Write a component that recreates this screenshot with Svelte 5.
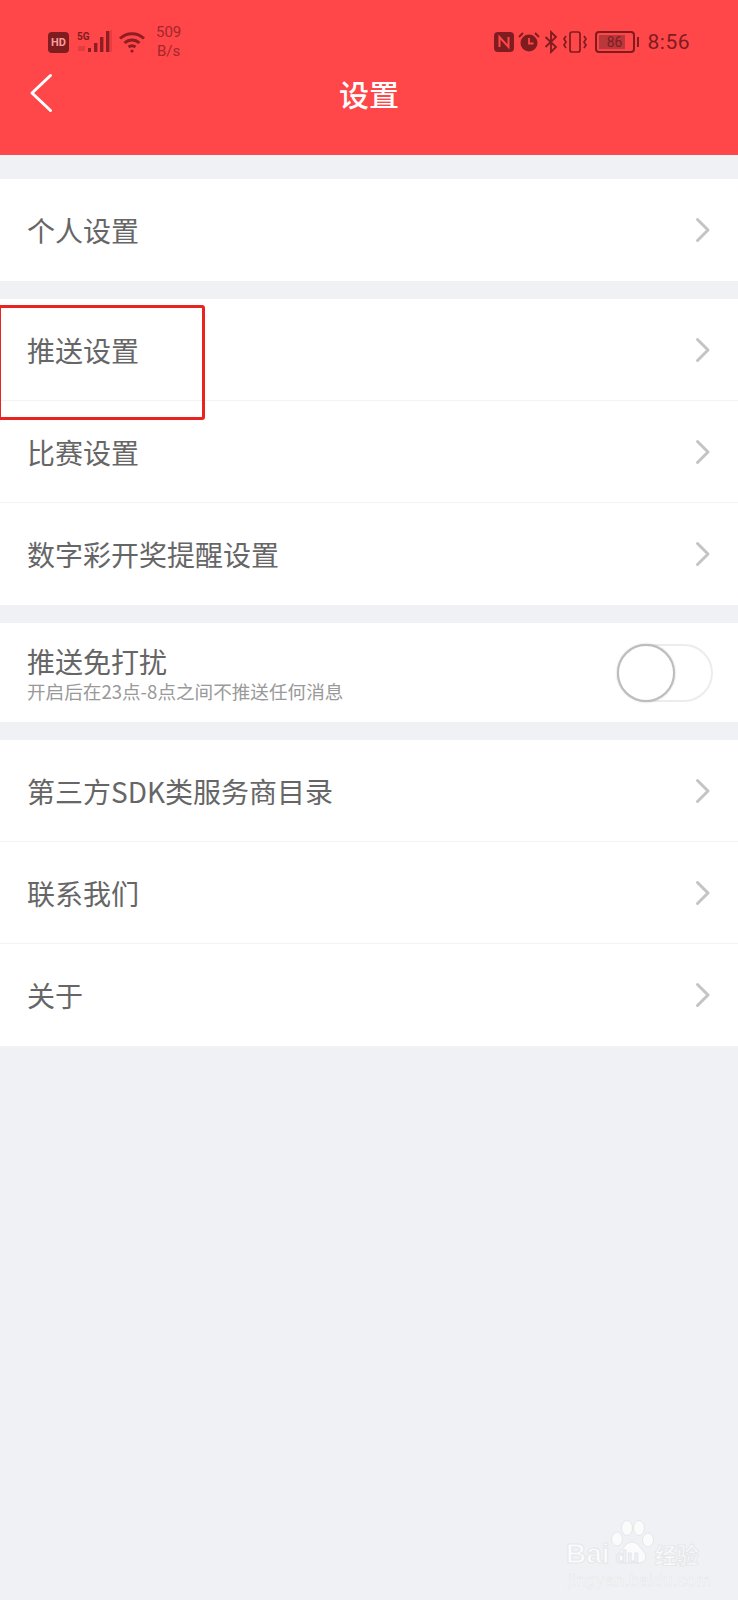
<script>
	const groups = [
		[{ label: '个人设置' }],
		[{ label: '推送设置' }, { label: '比赛设置' }, { label: '数字彩开奖提醒设置' }]
	];
	const lastGroup = [{ label: '第三方SDK类服务商目录' }, { label: '联系我们' }, { label: '关于' }];
</script>

{#snippet row(item)}
	<div class="row">
		<span class="label">{item.label}</span>
		<svg class="chev" width="16" height="26" viewBox="0 0 16 26" fill="none" stroke="#c4c4c4" stroke-width="3" stroke-linecap="round" stroke-linejoin="round"><path d="M2.5 2.5 13 13 2.5 23.5" /></svg>
	</div>
{/snippet}

<div class="page">
	<header class="top">
		<div class="status">
			<div class="side">
				<span class="hd">HD</span>
				<div class="sig">
					<span class="fiveg">5G</span>
					<svg width="36" height="24" viewBox="0 0 36 24" fill="#8f1d22">
						<rect x="12" y="18" width="3" height="4" />
						<rect x="18" y="13" width="3.4" height="9" />
						<rect x="24" y="7" width="3.4" height="15" />
						<rect x="30" y="1" width="3.4" height="21" />
						<rect x="34.5" y="0" width="1" height="22" opacity="0.4" />
						<rect x="2" y="16" width="7" height="5" opacity="0.25" />
					</svg>
				</div>
				<svg class="wifi" width="28" height="24" viewBox="0 0 28 24" fill="none" stroke="#8f1d22" stroke-width="3">
					<path d="M2 8.5C9 2 19 2 26 8.5" />
					<path d="M6.5 13C11 9 17 9 21.5 13" />
					<path d="M10.5 17C12.5 15.5 15.5 15.5 17.5 17" />
					<circle cx="14" cy="21" r="1.6" fill="#8f1d22" stroke="none" />
				</svg>
				<div class="speed"><span>509</span><span>B/s</span></div>
			</div>
			<div class="side right">
				<svg width="20" height="20" viewBox="0 0 20 20"><rect width="20" height="20" rx="4" fill="#7e1c20" /><path d="M5.5 15V5L14.5 15V5" fill="none" stroke="#ff4749" stroke-width="2" /></svg>
				<svg width="22" height="22" viewBox="0 0 22 22" fill="#7e1c20">
					<circle cx="11" cy="12" r="8.5" />
					<path d="M11 7v5.5h4.5" fill="none" stroke="#ff4749" stroke-width="1.8" />
					<path d="M1 6 5 2M21 6 17 2" fill="none" stroke="#7e1c20" stroke-width="1.8" />
				</svg>
				<svg width="14" height="24" viewBox="0 0 14 24" fill="none" stroke="#7e1c20" stroke-width="1.8"><path d="M1.5 7 12 17 7 22V2l5 5L1.5 17" /></svg>
				<svg width="26" height="22" viewBox="0 0 26 22" fill="none" stroke="#7e1c20" stroke-width="1.7">
					<rect x="8" y="1" width="10" height="20" rx="2" />
					<path d="M4 5 2 8l2 3-2 3 2 3M22 5l2 3-2 3 2 3-2 3" />
				</svg>
				<div class="batt">
					<div class="cell"><span class="level"></span><span class="num">86</span></div>
					<span class="nub"></span>
				</div>
				<span class="time">8:56</span>
			</div>
		</div>
		<div class="nav">
			<svg class="back" width="24" height="40" viewBox="0 0 24 40" fill="none" stroke="#fff" stroke-width="3" stroke-linecap="round" stroke-linejoin="round"><path d="M21.5 2.5 3 20l18.5 17.5" /></svg>
			<h1>设置</h1>
		</div>
	</header>

	<main>
		{#each groups as group}
			<section class="group">
				{#each group as item}
					{@render row(item)}
				{/each}
			</section>
		{/each}

		<section class="group dnd">
			<div class="dnd-text">
				<span class="label">推送免打扰</span>
				<span class="sub">开启后在23点-8点之间不推送任何消息</span>
			</div>
			<div class="switch"><span class="knob"></span></div>
		</section>

		<section class="group">
			{#each lastGroup as item}
				{@render row(item)}
			{/each}
		</section>
	</main>

	<div class="mark"></div>

	<div class="watermark">
		<svg class="paw" width="46" height="46" viewBox="0 0 46 46" fill="#fbfbfc" stroke="#e6e7ea" stroke-width="1">
			<ellipse cx="7" cy="19" rx="5.5" ry="7" />
			<ellipse cx="17" cy="8" rx="5.5" ry="7.5" />
			<ellipse cx="29" cy="8" rx="5.5" ry="7.5" />
			<ellipse cx="38" cy="20" rx="5.5" ry="7" />
			<path d="M22 22c6 0 8 6 12 10 4 5 1 11-5 11-3 0-5-1-7-1s-4 1-7 1c-6 0-9-6-5-11 4-4 6-10 12-10z" />
		</svg>
		<div class="wm-main"><span class="bai">Bai</span><span class="du">du</span><span class="jy">经验</span></div>
		<div class="wm-url">jingyan.baidu.com</div>
	</div>
</div>

<style>
	:global(body) {
		margin: 0;
		background: #f0f1f4;
	}

	.page {
		position: relative;
		height: 1600px;
		overflow: hidden;
		background: #f0f1f4;
		font-family: "Noto Sans CJK SC", "Liberation Sans", sans-serif;
	}

	.top {
		height: 155px;
		background: #ff4749;
	}

	.status {
		display: flex;
		justify-content: space-between;
		align-items: center;
		height: 40px;
		padding: 22px 48px 0 48px;
		box-sizing: content-box;
	}

	.side {
		display: flex;
		align-items: center;
	}

	.side.right {
		gap: 4px;
		margin-right: 0;
	}

	.hd {
		display: flex;
		align-items: center;
		justify-content: center;
		width: 21px;
		height: 21px;
		border-radius: 4px;
		background: #7e1c20;
		color: #ff9a9a;
		font: 700 11px "Roboto", sans-serif;
	}

	.sig {
		position: relative;
		margin-left: 7px;
		display: flex;
	}

	.fiveg {
		position: absolute;
		left: 1px;
		top: 1px;
		font: 700 10px "Roboto", sans-serif;
		color: #7e1c20;
	}

	.wifi {
		margin-left: 6px;
	}

	.speed {
		display: flex;
		flex-direction: column;
		align-items: center;
		margin-left: 10px;
		font: 15px/19px "Roboto", sans-serif;
		color: #a3262b;
	}

	.batt {
		display: flex;
		align-items: center;
		margin-left: 3px;
		gap: 2px;
	}

	.cell {
		position: relative;
		width: 36px;
		height: 18px;
		border: 2px solid #7e1c20;
		border-radius: 4px;
		display: flex;
		align-items: center;
		justify-content: center;
	}

	.level {
		position: absolute;
		left: 2px;
		top: 2px;
		bottom: 2px;
		width: 26px;
		background: #b8383c;
	}

	.num {
		position: relative;
		font: 14px "Roboto", sans-serif;
		color: #7e1c20;
	}

	.nub {
		width: 2px;
		height: 10px;
		background: #7e1c20;
	}

	.time {
		margin-left: 5px;
		font: 21px "Roboto", sans-serif;
		color: #7e1c20;
		letter-spacing: 0.5px;
	}

	.nav {
		position: relative;
		display: flex;
		justify-content: center;
		align-items: center;
		height: 64px;
		margin-top: -1px;
	}

	.back {
		position: absolute;
		left: 29px;
		top: 12px;
	}

	h1 {
		margin: 0;
		font-size: 30px;
		font-weight: 500;
		color: #fff;
	}

	main {
		display: flex;
		flex-direction: column;
		padding-top: 24px;
		gap: 18px;
	}

	.group {
		background: #fff;
	}

	.row {
		display: flex;
		justify-content: space-between;
		align-items: center;
		height: 102px;
		padding: 0 27px;
		box-sizing: border-box;
		border-bottom: 1px solid #f3f3f4;
	}

	.row:last-child {
		border-bottom: none;
	}

	.label {
		font-size: 28px;
		line-height: 36px;
		color: #666;
	}

	.chev {
		margin-right: 0;
	}

	.dnd {
		display: flex;
		justify-content: space-between;
		align-items: center;
		height: 99px;
		padding: 0 27px;
	}

	.dnd-text {
		display: flex;
		flex-direction: column;
	}

	.sub {
		font-size: 18.6px;
		line-height: 24px;
		color: #999;
	}

	.switch {
		position: relative;
		width: 96px;
		height: 58px;
		margin-right: -2px;
		border: 2px solid #ececec;
		border-radius: 31px;
		box-sizing: border-box;
	}

	.knob {
		position: absolute;
		left: -2px;
		top: -2px;
		width: 58px;
		height: 58px;
		box-sizing: border-box;
		border-radius: 50%;
		background: #fff;
		border: 2px solid #bdbdbd;
		box-shadow: 0 0 2px rgba(0, 0, 0, 0.25);
	}

	.mark {
		position: absolute;
		left: -2px;
		top: 305px;
		width: 207px;
		height: 115px;
		box-sizing: border-box;
		border: 3.5px solid #ea2320;
		border-radius: 3px;
	}

	.watermark {
		position: absolute;
		left: 566px;
		top: 1520px;
		width: 145px;
		height: 70px;
		color: #fbfbfc;
	}

	.paw {
		position: absolute;
		left: 44px;
		top: 0;
	}

	.wm-main {
		position: absolute;
		left: 0;
		top: 17px;
		font: 700 28px/34px "Liberation Sans", sans-serif;
		-webkit-text-stroke: 1px #e6e7ea;
		white-space: nowrap;
	}

	.du {
		position: relative;
		margin-left: 6px;
		font-size: 19px;
		color: #f0f1f4;
	}

	.jy {
		margin-left: 16px;
		font: 700 22px "Noto Sans CJK SC", sans-serif;
	}

	.wm-url {
		position: absolute;
		left: 2px;
		top: 51px;
		font: 16.5px "Liberation Sans", sans-serif;
		letter-spacing: 0.6px;
		color: #f9f9fa;
		-webkit-text-stroke: 0.4px #e3e4e7;
		white-space: nowrap;
	}
</style>
